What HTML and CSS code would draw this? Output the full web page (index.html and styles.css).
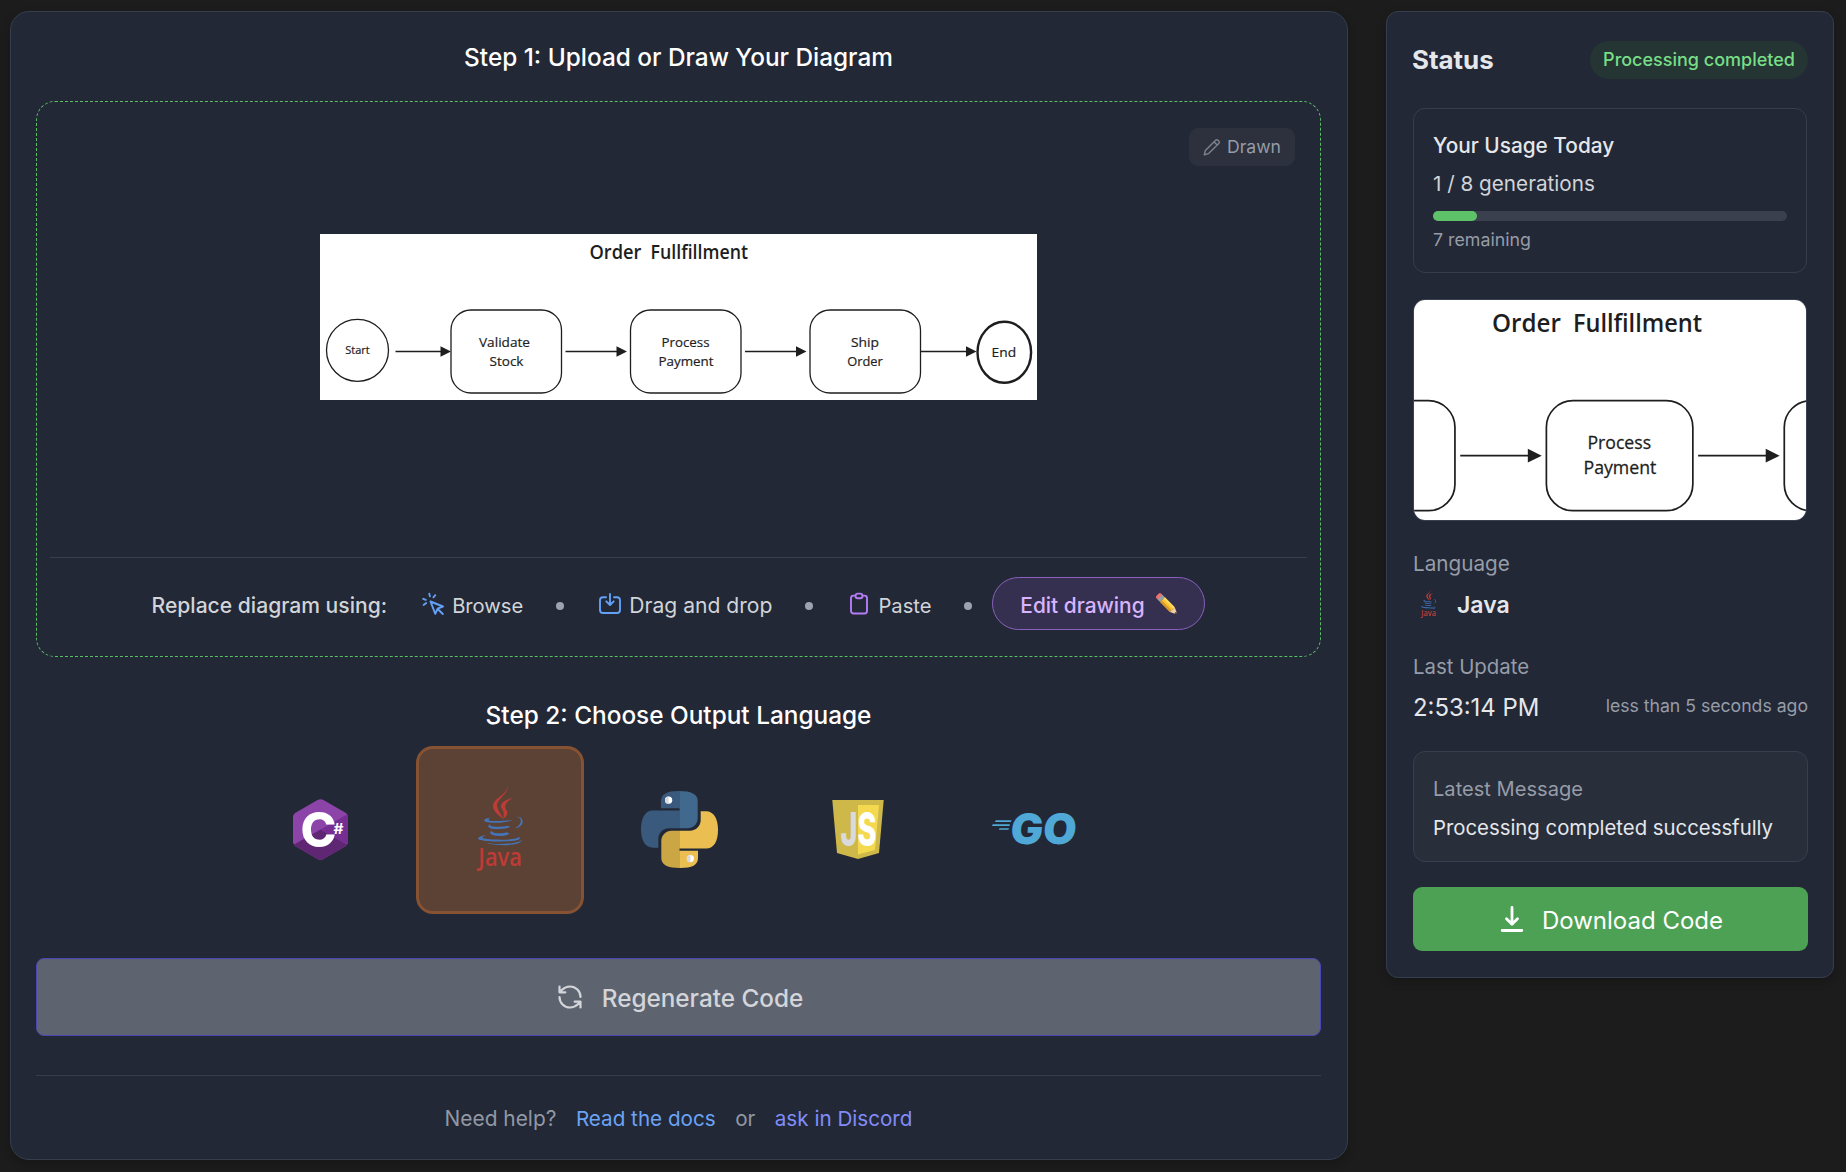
FILE: index.html
```html
<!DOCTYPE html>
<html lang="en">
<head>
<meta charset="utf-8">
<title>Diagram to Code</title>
<link rel="stylesheet" href="styles.css">
</head>
<body>
<div class="page">
  <main class="panel builder">
    <h2 class="step-title">Step 1: Upload or Draw Your Diagram</h2>

    <section class="dropzone">
      <div class="drawn-badge">
        <svg class="drawn-icon" viewBox="0 0 18 18"><path d="M12.600 2.200a1.600 1.600 0 0 1 2.300 0l.9.9a1.600 1.600 0 0 1 0 2.300L5.600 15.600 1.300 16.700 2.400 12.400ZM11 3.800l3.200 3.200" /></svg>
        <span>Drawn</span>
      </div>

      <div class="preview">
        <svg class="diagram" viewBox="0 0 717 166">
          <rect class="paper" width="717" height="166"/>
          <g class="hand">
            <text x="269.500" y="24.500" textLength="52" lengthAdjust="spacingAndGlyphs">Order</text>
            <text x="330.500" y="24.500" textLength="97.500" lengthAdjust="spacingAndGlyphs">Fullfillment</text>
          </g>
          <g class="ink">
            <circle cx="37.500" cy="116.300" r="31"/>
            <rect x="131" y="76" width="110.500" height="83" rx="20"/>
            <rect x="310.500" y="76" width="110.500" height="83" rx="20"/>
            <rect x="490" y="76" width="110.500" height="83" rx="20"/>
            <ellipse class="end" cx="684.300" cy="118.300" rx="26.800" ry="30.500"/>
            <path d="M75.500 117.500H123M245.500 117.500H298M425 117.500H477M601 117.500H648"/>
          </g>
          <path class="tips" d="M120.500 112.300 131 117.500 120.500 122.700ZM296.500 112.300 307 117.500 296.500 122.700ZM476 112.300 486.500 117.500 476 122.700ZM646 112.300 656.500 117.500 646 122.700Z"/>
          <g class="labels">
            <text class="small" x="37.500" y="120" textLength="24.500" lengthAdjust="spacingAndGlyphs">Start</text>
            <text x="184.500" y="112.800" textLength="51" lengthAdjust="spacingAndGlyphs">Validate</text>
            <text x="186.500" y="131.600" textLength="34" lengthAdjust="spacingAndGlyphs">Stock</text>
            <text x="365.500" y="112.800" textLength="48" lengthAdjust="spacingAndGlyphs">Process</text>
            <text x="366" y="131.600" textLength="55" lengthAdjust="spacingAndGlyphs">Payment</text>
            <text x="545" y="112.800" textLength="28" lengthAdjust="spacingAndGlyphs">Ship</text>
            <text x="545" y="131.600" textLength="35.500" lengthAdjust="spacingAndGlyphs">Order</text>
            <text x="683.800" y="123" textLength="24.500" lengthAdjust="spacingAndGlyphs">End</text>
          </g>
        </svg>
      </div>

      <div class="replace-row">
        <span class="replace-label">Replace diagram using:</span>
        <span class="method">
          <svg class="method-icon blue" viewBox="0 0 24 24"><path d="M9.500 9.500l12.500 5-5.400 2.100-2.300 5.200ZM16.800 17l5 5M8.300 1.800l.6 2.600M2.200 6.800l2.600 1M14.300 3.200l-1.900 2.100M2.600 13l2.600-2"/></svg>
          <span>Browse</span>
        </span>
        <i class="dot"></i>
        <span class="method">
          <svg class="method-icon blue" viewBox="0 0 24 24"><path d="M8 5.200H5a3 3 0 0 0-3 3V18a3 3 0 0 0 3 3h14a3 3 0 0 0 3-3V8.200a3 3 0 0 0-3-3h-3M12 2v10.500M8.300 9.300 12 13l3.700-3.700"/></svg>
          <span class="wide">Drag and drop</span>
        </span>
        <i class="dot"></i>
        <span class="method">
          <svg class="method-icon purple" viewBox="0 0 24 24"><path d="M8.300 3.600H6.500a2.500 2.500 0 0 0-2.500 2.500V19a2.500 2.500 0 0 0 2.500 2.500h11A2.500 2.500 0 0 0 20 19V6.100a2.500 2.500 0 0 0-2.500-2.500h-1.800"/><rect x="8.500" y="1.600" width="7" height="4.600" rx="2.300"/></svg>
          <span>Paste</span>
        </span>
        <i class="dot"></i>
        <button class="edit-button">
          <span>Edit drawing</span>
          <svg class="pencil" viewBox="0 0 24 24">
            <g transform="rotate(45 12 12)">
              <path fill="#e8736f" d="M-1.800 9.600a2 2 0 0 1 2-1.700H3v7H.2a2 2 0 0 1-2-1.700Z"/>
              <path fill="#8fa3ad" d="M2 7.900h3.500v7H2Z"/>
              <path fill="#f9c22f" d="M5.500 7.900H20v7H5.500Z"/>
              <path fill="#fbd95f" d="M5.500 7.900H20v2.300H5.500Z"/>
              <path fill="#d9982a" d="M5.500 12.600H20v2.300H5.500Z"/>
              <path fill="#f0cfa0" d="M20 7.900l5.500 2.500v2L20 14.900Z"/>
              <path fill="#4b4b50" d="M24.300 9.900l3 1.500-3 1.500Z"/>
            </g>
          </svg>
        </button>
      </div>
    </section>

    <h2 class="step-title second">Step 2: Choose Output Language</h2>
    <div class="languages">
      <button class="tile">
        <svg width="55" height="61" viewBox="0 0 55 61">
          <path fill="#8d44a9" d="M25 .8q2.500-1.300 5 0L52.500 13.800Q55 15.300 55 18v25q0 2.700-2.500 4.200L30 60.200q-2.500 1.300-5 0L2.500 47.200Q0 45.700 0 43V18q0-2.700 2.500-4.200Z"/>
          <path fill="#5f2773" d="M1 45.500 27.500 30.500 54 45.500q-.5 1.200-1.500 1.700L30 60.200q-2.500 1.300-5 0L2.500 47.200Q1.400 46.500 1 45.500Z"/>
          <path fill="#772e92" d="M27.500 30.500 54 15.500q1 1.200 1 2.500v25q0 1.400-1 2.500Z"/>
          <text class="csharp-c" x="7.500" y="47.800" textLength="36" lengthAdjust="spacingAndGlyphs">C</text>
          <text class="csharp-hash" x="40.500" y="35" textLength="10" lengthAdjust="spacingAndGlyphs">#</text>
        </svg>
      </button>
      <button class="tile selected">
        <svg class="java" width="46.700" height="86.700" viewBox="22 50 140 260">
          <g fill="#be3b37">
            <path d="M110 52C116 75 80 90 79 111C79 125 92 135 97 152C84 140 66 128 67 112C69 88 112 78 110 52Z"/>
            <path d="M128 88C110 93 90 100 91 114C92 124 100 126 99 138C99 146 98 150 97 152C113 142 112 130 105 122C99 112 108 98 128 88Z"/>
            <text class="java-word" x="23" y="293" textLength="131" lengthAdjust="spacingAndGlyphs">Java</text>
          </g>
          <g fill="#4475b9">
            <path d="M58 148C40 150 32 159 52 162C75 166 115 162 125 155C105 158 70 159 58 157C52 156 52 152 58 148Z"/>
            <path d="M131 147C145 143 154 152 149 164C145 173 138 177 132 180C150 178 159 166 155 155C152 145 140 143 131 147Z"/>
            <path d="M58 168C46 176 56 182 82 182C100 182 112 180 118 176L112 172C95 176 66 177 60 172Z"/>
            <path d="M63 187C51 195 64 202 85 203C100 203 110 200 116 196L109 192C95 197 70 195 65 191Z"/>
            <path d="M48 200C25 202 14 212 30 215C55 222 130 220 143 214C150 210 148 207 143 205C145 209 138 211 120 213C90 215 50 214 37 210C32 208 38 203 48 200Z"/>
            <path d="M48 223C75 230 145 227 153 214C154 228 115 232 85 230C70 229 55 227 48 223Z"/>
          </g>
        </svg>
      </button>
      <button class="tile">
        <svg width="77" height="77" viewBox="0 0 77 77">
          <defs>
            <linearGradient id="pyBlue" gradientUnits="userSpaceOnUse" x1="0" x2="77" y1="0" y2="0"><stop offset=".5" stop-color="#3a5a7d"/><stop offset=".5" stop-color="#41688d"/></linearGradient>
            <linearGradient id="pyGold" gradientUnits="userSpaceOnUse" x1="77" x2="0" y1="0" y2="0"><stop offset=".5" stop-color="#cba645"/><stop offset=".5" stop-color="#eabe50"/></linearGradient>
          </defs>
          <path fill="url(#pyBlue)" d="M20 17.300V10C20 3 26 0 38 0S56.700 3 56.700 10V27C56.700 33 52 37.300 46.500 37.300H28C22 37.300 17.300 42 17.300 48V56.700H12C4 56.700 0 49 0 38S4 19.500 12 19.500H38.500V17.300Z"/>
          <path fill="url(#pyGold)" transform="rotate(180 38.500 38.500)" d="M20 17.300V10C20 3 26 0 38 0S56.700 3 56.700 10V27C56.700 33 52 37.300 46.500 37.300H28C22 37.300 17.300 42 17.300 48V56.700H12C4 56.700 0 49 0 38S4 19.500 12 19.500H38.500V17.300Z"/>
          <circle cx="27.600" cy="9.200" r="3.600" fill="#fff"/>
          <circle cx="49.400" cy="67.600" r="3.600" fill="#fff"/>
          <path d="M27.600 5.600a3.600 3.600 0 0 0 0 7.200ZM49.400 64a3.600 3.600 0 0 0 0 7.200Z" fill="#d9dadd"/>
        </svg>
      </button>
      <button class="tile">
        <svg width="52" height="59" viewBox="0 0 52 59">
          <defs>
            <linearGradient id="jsLetters" gradientUnits="userSpaceOnUse" x1="0" x2="52" y1="0" y2="0"><stop offset=".5" stop-color="#d9dadb"/><stop offset=".5" stop-color="#fff"/></linearGradient>
          </defs>
          <path fill="#cdb849" d="M.3 0H51.700L47 53 26 59 5 53Z"/>
          <path fill="#f4d94f" d="M26 5H47L43 50 26 54.600Z"/>
          <text class="js-word" x="8.500" y="45.500" textLength="36" lengthAdjust="spacingAndGlyphs">JS</text>
        </svg>
      </button>
      <button class="tile">
        <svg class="go" width="84" height="34" viewBox="0 0 84 34">
          <path fill="#4fa8d5" d="M3.700 8.300H19.500L18.800 10H3Zm-3 3.900H18L17.500 14H0ZM7.500 16.200H17L16.500 17.800H6.800Z"/>
          <text class="go-word" transform="translate(17.500 32) skewX(-5)" textLength="66" lengthAdjust="spacingAndGlyphs">GO</text>
        </svg>
      </button>
    </div>

    <button class="regenerate">
      <svg class="regenerate-icon" viewBox="0 0 24 24"><path d="M21 12a9 9 0 0 0-9-9 9.750 9.750 0 0 0-6.740 2.740L3 8M3 3v5h5M3 12a9 9 0 0 0 9 9 9.750 9.750 0 0 0 6.740-2.740L21 16M16 16h5v5"/></svg>
      <span>Regenerate Code</span>
    </button>

    <footer class="help">
      <span class="need">Need help?</span>
      <a class="docs">Read the docs</a>
      <span>or</span>
      <a class="discord">ask in Discord</a>
    </footer>
  </main>

  <aside class="panel status">
    <header class="status-head">
      <h2 class="status-title">Status</h2>
      <span class="status-badge">Processing completed</span>
    </header>

    <section class="usage">
      <div class="usage-title">Your Usage Today</div>
      <div class="usage-count">1 / 8 generations</div>
      <div class="bar"><div class="bar-fill" style="width: 12.5%"></div></div>
      <div class="usage-left">7 remaining</div>
    </section>

    <div class="thumb">
      <svg class="thumb-diagram" viewBox="0 0 717 166" preserveAspectRatio="xMidYMid slice">
        <rect class="paper" width="717" height="166"/>
        <g class="hand">
          <text x="269.500" y="24.500" textLength="52" lengthAdjust="spacingAndGlyphs">Order</text>
          <text x="330.500" y="24.500" textLength="97.500" lengthAdjust="spacingAndGlyphs">Fullfillment</text>
        </g>
        <g class="ink">
          <rect x="131" y="76" width="110.500" height="83" rx="20"/>
          <rect x="310.500" y="76" width="110.500" height="83" rx="20"/>
          <rect x="490" y="76" width="110.500" height="83" rx="20"/>
          <path d="M245.500 117.500H298M425 117.500H477"/>
        </g>
        <path class="tips" d="M296.500 112.300 307 117.500 296.500 122.700ZM476 112.300 486.500 117.500 476 122.700Z"/>
        <g class="labels">
          <text x="365.500" y="112.800" textLength="48" lengthAdjust="spacingAndGlyphs">Process</text>
          <text x="366" y="131.600" textLength="55" lengthAdjust="spacingAndGlyphs">Payment</text>
        </g>
      </svg>
    </div>

    <div class="caption language-caption">Language</div>
    <div class="language-row">
      <svg class="java-small" viewBox="22 50 140 260">
        <g fill="#c03f3c">
          <path d="M110 52C116 75 80 90 79 111C79 125 92 135 97 152C84 140 66 128 67 112C69 88 112 78 110 52Z"/>
          <path d="M128 88C110 93 90 100 91 114C92 124 100 126 99 138C99 146 98 150 97 152C113 142 112 130 105 122C99 112 108 98 128 88Z"/>
          <text class="java-word" x="23" y="293" textLength="131" lengthAdjust="spacingAndGlyphs">Java</text>
        </g>
        <g fill="#4070b5">
          <path d="M58 148C40 150 32 159 52 162C75 166 115 162 125 155C105 158 70 159 58 157C52 156 52 152 58 148Z"/>
          <path d="M131 147C145 143 154 152 149 164C145 173 138 177 132 180C150 178 159 166 155 155C152 145 140 143 131 147Z"/>
          <path d="M58 168C46 176 56 182 82 182C100 182 112 180 118 176L112 172C95 176 66 177 60 172Z"/>
          <path d="M63 187C51 195 64 202 85 203C100 203 110 200 116 196L109 192C95 197 70 195 65 191Z"/>
          <path d="M48 200C25 202 14 212 30 215C55 222 130 220 143 214C150 210 148 207 143 205C145 209 138 211 120 213C90 215 50 214 37 210C32 208 38 203 48 200Z"/>
          <path d="M48 223C75 230 145 227 153 214C154 228 115 232 85 230C70 229 55 227 48 223Z"/>
        </g>
      </svg>
      <span class="language-name">Java</span>
    </div>

    <div class="caption update-caption">Last Update</div>
    <div class="update-row">
      <span class="time">2:53:14 PM</span>
      <span class="ago">less than 5 seconds ago</span>
    </div>

    <section class="message">
      <div class="message-caption">Latest Message</div>
      <div class="message-text">Processing completed successfully</div>
    </section>

    <button class="download">
      <svg class="download-icon" viewBox="0 0 28 28"><path d="M14 2.500V19M8.500 13.800 14 19.200 19.500 13.800M4.200 25.500H23.800"/></svg>
      <span>Download Code</span>
    </button>
  </aside>
</div>
</body>
</html>
```
FILE: styles.css
```css
* { box-sizing: border-box; }

body {
  margin: 0;
  background: #1c1c1c;
  color: #e5e7eb;
  font-family: Inter, "Liberation Sans", sans-serif;
}

button {
  margin: 0;
  padding: 0;
  border: 0;
  background: none;
  color: inherit;
  font: inherit;
}

h2 { margin: 0; }
span, div, h2, a { white-space: nowrap; }
svg { display: block; flex: none; overflow: visible; }

.page {
  display: flex;
  align-items: flex-start;
  gap: 38px;
  height: 1172px;
  padding: 11px 0 0 10px;
  overflow: hidden;
}

.panel {
  flex: none;
  background: #222836;
  border: 1px solid #353e4c;
  box-shadow: 0 4px 10px rgba(0, 0, 0, .2);
}

/* Builder panel */
.builder {
  width: 1338px;
  height: 1149px;
  padding: 25px 26px 0 25px;
  border-radius: 19px;
}

.step-title {
  height: 40px;
  line-height: 40px;
  text-align: center;
  color: #fff;
  font-size: 24.36px;
  font-weight: 500;
}
.step-title.second { margin-top: 38px; }

.dropzone {
  position: relative;
  height: 556px;
  margin-top: 24px;
  padding: 0 13px;
  border: 1px dashed #58c062;
  border-radius: 19px;
}

.drawn-badge {
  position: absolute;
  top: 26px;
  right: 25px;
  display: flex;
  align-items: center;
  gap: 6px;
  width: 106px;
  height: 38px;
  padding: 0 0 1px 14px;
  border-radius: 9px;
  background: #2c313d;
  color: #959ba7;
  font-size: 17.6px;
}
.drawn-icon {
  width: 18px;
  height: 18px;
  fill: none;
  stroke: #7d838f;
  stroke-width: 1.4;
  stroke-linejoin: round;
}

.preview {
  height: 455px;
  padding-top: 132px;
}
.diagram {
  width: 717px;
  height: 166px;
  margin: 0 auto;
}

.paper { fill: #fff; }
.hand {
  fill: #1e1e1e;
  font-family: "Open Sans", sans-serif;
  font-size: 19.5px;
  font-weight: 600;
}
.ink {
  fill: none;
  stroke: #1e1e1e;
  stroke-width: 1.3;
}
.ink .end { stroke-width: 2.400; }
.tips { fill: #1e1e1e; }
.labels {
  fill: #1e1e1e;
  stroke: #1e1e1e;
  stroke-width: .2;
  font-family: "Open Sans", sans-serif;
  font-size: 13.2px;
  font-weight: 400;
  text-anchor: middle;
}
.labels .small { font-size: 10.5px; }

.replace-row {
  display: flex;
  align-items: center;
  justify-content: center;
  gap: 20px;
  padding-top: 19px;
  border-top: 1px solid #383e4b;
  color: #d1d4d9;
  font-size: 20.2px;
}
.replace-label {
  padding-top: 3px;
  font-size: 21.1px;
  font-weight: 500;
}
.method {
  display: flex;
  align-items: center;
  gap: 7px;
  padding: 3px 13px 0 14px;
}
.method .wide { font-size: 21.1px; }
.method-icon {
  width: 24px;
  height: 24px;
  margin-top: -3px;
  fill: none;
  stroke-width: 1.9;
  stroke-linecap: round;
  stroke-linejoin: round;
}
.blue { stroke: #64a0f6; }
.purple { stroke: #b47df5; }
.dot {
  width: 8px;
  height: 8px;
  margin-top: 5px;
  border-radius: 50%;
  background: #9ca3af;
}
.edit-button {
  display: flex;
  align-items: center;
  justify-content: center;
  gap: 10px;
  width: 213px;
  height: 53px;
  padding-top: 3px;
  border: 1px solid #8960bf;
  border-radius: 27px;
  background: #353050;
  color: #d8b4fe;
  font-size: 20.9px;
  font-weight: 500;
}
.pencil {
  width: 23px;
  height: 23px;
  margin-top: -1px;
}

.languages {
  display: flex;
  justify-content: center;
  gap: 11.200px;
  margin-top: 11px;
  padding-left: 1px;
}
.tile {
  display: flex;
  align-items: center;
  justify-content: center;
  width: 168px;
  height: 168px;
  padding-bottom: 2px;
  border: 3px solid transparent;
  border-radius: 17px;
}
.tile.selected {
  border-color: #875232;
  background: #5b4235;
}
.csharp-c {
  fill: #fff;
  font-family: Inter, sans-serif;
  font-size: 48px;
  font-weight: 800;
}
.csharp-hash {
  fill: #fff;
  font-family: Inter, sans-serif;
  font-size: 14px;
  font-weight: 700;
}
.java { margin: 0 0 1px 3px; }
.java-word {
  font-family: "Open Sans", sans-serif;
  font-size: 74px;
  font-weight: 600;
}
.js-word {
  fill: url(#jsLetters);
  font-family: Inter, sans-serif;
  font-size: 46px;
  font-weight: 800;
}
.go { margin: -1px 6px 0 0; }
.go-word {
  fill: #4fa8d5;
  font-family: Inter, sans-serif;
  font-size: 42px;
  font-weight: 900;
}

.regenerate {
  display: flex;
  align-items: center;
  justify-content: center;
  gap: 18px;
  width: 100%;
  height: 78px;
  margin-top: 44px;
  padding: 2px 0 0 2px;
  border: 1px solid #4a47b5;
  border-radius: 8px;
  background: #5e6370;
  color: #d3d5d9;
  font-size: 24.3px;
  font-weight: 500;
}
.regenerate-icon {
  width: 28px;
  height: 28px;
  margin-top: -2px;
  fill: none;
  stroke: #d3d5d9;
  stroke-width: 1.9;
  stroke-linecap: round;
  stroke-linejoin: round;
}

.help {
  display: flex;
  justify-content: center;
  gap: 19.500px;
  margin-top: 39px;
  padding-top: 28px;
  border-top: 1px solid #363e4b;
  color: #9298a4;
  font-size: 20.65px;
  line-height: 30px;
}
.need { font-size: 20.9px; }
.docs { color: #6ba3f5; }
.discord { color: #818cf8; }

/* Status panel */
.status {
  width: 448px;
  height: 967px;
  padding: 29px 25px 0 26px;
  border-radius: 12px;
}
.status-head {
  display: flex;
  align-items: center;
  justify-content: space-between;
  height: 38px;
}
.status-title {
  margin-left: -1px;
  font-size: 25.9px;
  font-weight: 700;
  line-height: 36px;
}
.status-badge {
  width: 218px;
  height: 38px;
  border-radius: 19px;
  background: #243533;
  color: #78dd87;
  font-size: 18px;
  font-weight: 500;
  line-height: 37px;
  text-align: center;
}

.usage {
  width: 394px;
  height: 165px;
  margin-top: 29px;
  padding: 22px 19px 0;
  border: 1px solid #373d4a;
  border-radius: 12px;
}
.usage-title {
  font-size: 20.8px;
  font-weight: 500;
  line-height: 30px;
}
.usage-count {
  margin-top: 8px;
  color: #d1d4d9;
  font-size: 20.7px;
  line-height: 30px;
}
.bar {
  height: 10px;
  margin-top: 12px;
  border-radius: 5px;
  background: #3a404e;
}
.bar-fill {
  height: 10px;
  border-radius: 5px;
  background: #5ec269;
}
.usage-left {
  margin-top: 7px;
  color: #969ca8;
  font-size: 17.8px;
  line-height: 24px;
}

.thumb {
  width: 394px;
  height: 222px;
  margin-top: 26px;
  overflow: hidden;
  border: 1px solid #374151;
  border-radius: 12px;
}
.thumb-diagram {
  width: 100%;
  height: 100%;
  overflow: hidden;
}

.caption {
  color: #969ca8;
  font-size: 20.7px;
  line-height: 30px;
}
.language-caption { margin-top: 28px; }
.language-row {
  display: flex;
  align-items: center;
  height: 36px;
  margin-top: 8px;
}
.java-small {
  width: 16px;
  height: 29px;
  margin: -3px 20px 0 8px;
}
.language-name {
  font-size: 23px;
  font-weight: 600;
}
.update-caption {
  margin-top: 29px;
  font-size: 20.4px;
}
.update-row {
  display: flex;
  align-items: center;
  justify-content: space-between;
  height: 36px;
  margin-top: 7px;
}
.time { font-size: 23.9px; }
.ago {
  margin-top: -3px;
  color: #969ca8;
  font-size: 17.65px;
}

.message {
  height: 111px;
  margin-top: 26px;
  padding: 22px 19px 0;
  border: 1px solid #383e4b;
  border-radius: 12px;
  background: #292e3b;
}
.message-caption {
  color: #969ca8;
  font-size: 20.1px;
  line-height: 30px;
}
.message-text {
  margin-top: 9px;
  font-size: 20.33px;
  line-height: 30px;
}

.download {
  display: flex;
  align-items: center;
  justify-content: center;
  gap: 16px;
  width: 100%;
  height: 64px;
  margin-top: 25px;
  padding-top: 2px;
  border-radius: 9px;
  background: #4da154;
  color: #fff;
  font-size: 24px;
}
.download-icon {
  width: 28px;
  height: 28px;
  margin-top: -3px;
  fill: none;
  stroke: #fff;
  stroke-width: 2.800;
  stroke-linecap: round;
  stroke-linejoin: round;
}
```
